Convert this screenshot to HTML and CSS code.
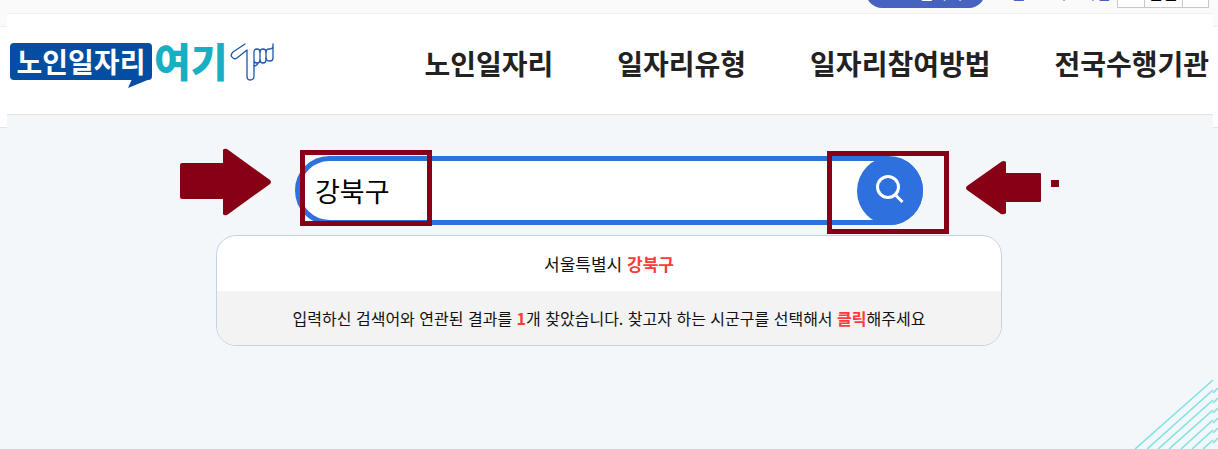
FILE: index.html
```html
<!DOCTYPE html>
<html lang="ko">
<head>
    <meta charset="UTF-8">
    <meta name="viewport" content="width=device-width, initial-scale=1.0">
    <title>노인일자리 여기</title>
    <link rel="stylesheet" href="styles.css">
</head>
<body>
    <div class="page">
        <div class="util-bar">
            <button type="button" class="util-pill">노인일자리</button>
            <a href="#" class="util-link">홈</a>
            <a href="#" class="util-link">회원가입</a>
            <div class="zoom-box">
                <button type="button" aria-label="축소"></button>
                <button type="button">본문</button>
                <button type="button" aria-label="확대"></button>
            </div>
        </div>

        <header class="header">
            <a href="#" class="logo">
                <span class="logo-box">노인일자리
                    <svg class="logo-tail" width="22" height="9" viewBox="0 0 22 9"><path d="M4 0H22L0 9Z" fill="#034ea2"/></svg>
                </span>
                <span class="logo-here">여기</span>
                <svg class="logo-hand" width="45" height="40" viewBox="0 1 45 40" fill="none" stroke="#1c58a7" stroke-width="1.3" stroke-linecap="round" stroke-linejoin="round">
                    <path d="M15 2L3 10Q0 13 2 15Q4 18 7 16L17 8V34Q17 38 20 38Q24 38 24 34V24Q27 24 28 21"/>
                    <path d="M24 24V10Q24 7 27 7Q30 7 30 10V18Q30 21 27 21Q24 21 24 18"/>
                    <path d="M30 10Q30 7 33 7Q36 7 36 10V18Q36 21 33 21Q30 21 30 18"/>
                    <path d="M36 10Q36 7 39 7Q43 7 43 4V2V16Q43 19 40 19Q36 19 36 16"/>
                </svg>
            </a>
            <nav class="nav">
                <a href="#">노인일자리</a>
                <a href="#">일자리유형</a>
                <a href="#">일자리참여방법</a>
                <a href="#">전국수행기관</a>
            </nav>
        </header>

        <main class="main">
            <div class="search-wrap">
                <form class="search">
                    <input type="text" value="강북구" aria-label="시군구 검색">
                    <button type="button" class="search-btn" aria-label="검색">
                        <svg width="30" height="30" viewBox="0 0 30 30" fill="none" stroke="#fff" stroke-width="3">
                            <circle cx="13" cy="13" r="10.5"/>
                            <path d="M21 21.500L27.500 28"/>
                        </svg>
                    </button>
                </form>
                <span class="mark mark-input"></span>
                <span class="mark mark-btn"></span>
                <svg class="arrow arrow-left" width="92" height="68" viewBox="0 0 92 68"><path d="M2 15H43V2Q44 0 47 1L90 32Q92 34 90 36L47 67Q44 68 43 66V51H2Q0 51 0 49V17Q0 15 2 15Z" fill="#880015"/></svg>
                <svg class="arrow arrow-right" width="94" height="54" viewBox="0 0 94 54"><path d="M74 12H40V1Q38 -1 35 1L1 25Q-1 27 1 29L35 53Q38 54 40 52V41H74Q75 41 75 40V13Q75 12 74 12ZM85 19H93V26H85Z" fill="#880015"/></svg>
            </div>

            <div class="result">
                <a href="#" class="result-item">서울특별시 <strong>강북구</strong></a>
                <p class="result-info">입력하신 검색어와 연관된 결과를 <strong>1</strong>개 찾았습니다. 찾고자 하는 시군구를 선택해서 <strong>클릭</strong>해주세요</p>
            </div>
        </main>
    </div>

    <svg class="stripes" width="84" height="70" viewBox="0 0 84 70" fill="none" stroke="#7fe3e3" stroke-width="1.6">
        <path d="M1 70L79 1M13 70L79 11M24 70L79 21M35 70L79 31M47 70L79 41M58 70L79 51M69 70L79 61"/>
        <path d="M79 14L84 9M79 24L84 19M79 34L84 29M79 44L84 39M79 54L84 49M79 64L84 59"/>
    </svg>
</body>
</html>
```

FILE: styles.css
```css
* {
    box-sizing: border-box;
}

body {
    margin: 0;
    min-height: 100vh;
    overflow: hidden;
    font-family: "Noto Sans CJK KR", sans-serif;
    color: #111;
    /* bands of the full width page, seen at both sides of .page */
    background: linear-gradient(#fafafa 26px, #f0f0f0 26px 27px, #fff 27px 127px, #e1e5ea 127px 128px, #f3f7fa 128px);
}

a {
    color: inherit;
    text-decoration: none;
}

button {
    padding: 0;
    border: 0;
    font-family: inherit;
}

.page {
    margin: 0 5px 0 7px;
}

.util-bar {
    display: flex;
    justify-content: flex-end;
    align-items: flex-end;
    height: 14px;
    padding: 0 4px 5px 0;
    background: #fafafa;
    border-bottom: 1px solid #f0f0f0;
}

.util-pill {
    width: 119px;
    height: 32px;
    border-radius: 16px;
    background: #4563bf;
    color: #fff;
    font-size: 16px;
}

.util-link {
    margin-left: 26px;
    color: #4563bf;
    font-size: 16px;
    line-height: 32px;
}

.zoom-box {
    display: flex;
    height: 30px;
    margin-left: 6px;
    border: 1px solid #c8c8c8;
}

.zoom-box button {
    width: 26px;
    background: #fff;
    font-size: 16px;
}

.zoom-box button + button {
    border-left: 1px solid #c8c8c8;
}

.zoom-box button:nth-child(2) {
    width: 38px;
}

.header {
    display: flex;
    justify-content: space-between;
    height: 101px;
    padding: 29px 4px 0 3px;
    background: #fff;
    border-bottom: 1px solid #e1e5ea;
}

.logo {
    display: flex;
    align-items: flex-start;
}

.logo-box {
    position: relative;
    width: 142px;
    height: 37px;
    border-radius: 4px;
    background: #034ea2;
    color: #fff;
    font-size: 28px;
    font-weight: 700;
    line-height: 36px;
    text-align: center;
    white-space: nowrap;
}

.logo-tail {
    position: absolute;
    right: 2px;
    top: 36px;
}

.logo-here {
    margin-left: 2px;
    color: #16b0c5;
    font-size: 40px;
    font-weight: 900;
    line-height: 35px;
}

.logo-hand {
    margin-left: 2px;
}

.nav {
    display: flex;
    gap: 64px;
    color: #222;
    font-size: 28px;
    font-weight: 700;
    line-height: 40px;
    white-space: nowrap;
}

.main {
    padding: 41px 2px 0 0;
    background: #f3f7fa;
}

.search-wrap {
    position: relative;
    width: 628px;
    margin: 0 auto;
}

.search {
    display: flex;
    height: 69px;
    border: 5px solid #2d70de;
    border-radius: 35px;
    background: #fff;
}

.search input {
    flex: 1;
    min-width: 0;
    padding: 0 15px;
    border: 0;
    outline: 0;
    background: none;
    color: #000;
    font-family: inherit;
    font-size: 27px;
    font-weight: 400;
}

.search-btn {
    width: 66px;
    margin: -4px -5px -5px 0;
    border-radius: 50%;
    background: #2d70de;
}

/* red annotation marks over the search box */
.mark {
    position: absolute;
    border: 5px solid #880015;
}

.mark-input {
    left: 5px;
    top: -6px;
    width: 132px;
    height: 76px;
}

.mark-btn {
    right: -26px;
    top: -5px;
    width: 122px;
    height: 83px;
}

.arrow {
    position: absolute;
}

.arrow-left {
    right: 651px;
    top: -8px;
}

.arrow-right {
    left: 671px;
    top: 5px;
}

.result {
    max-width: 786px;
    margin: 10px auto 0;
    overflow: hidden;
    border: 1px solid #c3d3e2;
    border-radius: 20px;
    background: #fff;
    text-align: center;
}

.result-item {
    display: block;
    font-size: 17px;
    line-height: 55px;
}

.result-info {
    margin: 0;
    background: #f3f3f3;
    font-size: 16px;
    line-height: 54px;
}

.result strong {
    color: #ff3a3a;
}

.stripes {
    position: absolute;
    right: 0;
    bottom: 0;
}
```
